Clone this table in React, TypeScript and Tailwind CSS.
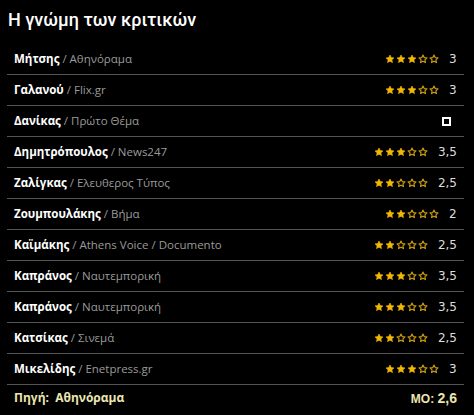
import React from "react";

type Review = { critic: string; outlet: string; rating: number | null };

const reviews: Review[] = [
  { critic: "Μήτσης", outlet: "Αθηνόραμα", rating: 3 },
  { critic: "Γαλανού", outlet: "Flix.gr", rating: 3 },
  { critic: "Δανίκας", outlet: "Πρώτο Θέμα", rating: null },
  { critic: "Δημητρόπουλος", outlet: "News247", rating: 3.5 },
  { critic: "Ζαλίγκας", outlet: "Ελευθερος Τύπος", rating: 2.5 },
  { critic: "Ζουμπουλάκης", outlet: "Βήμα", rating: 2 },
  { critic: "Καϊμάκης", outlet: "Athens Voice / Documento", rating: 2.5 },
  { critic: "Καπράνος", outlet: "Ναυτεμπορική", rating: 3.5 },
  { critic: "Καπράνος", outlet: "Ναυτεμπορική", rating: 3.5 },
  { critic: "Κατσίκας", outlet: "Σινεμά", rating: 2.5 },
  { critic: "Μικελίδης", outlet: "Enetpress.gr", rating: 3 },
];

const STAR =
  "M12 2.5l2.9 6.1 6.6.8-4.9 4.6 1.3 6.6L12 17.3l-5.9 3.3 1.3-6.6-4.9-4.6 6.6-.8z";

function Star({ filled }: { filled: boolean }) {
  return (
    <svg viewBox="0 0 24 24" className="w-[10px] h-[10px]">
      <path
        d={STAR}
        fill={filled ? "#f2b705" : "none"}
        stroke={filled ? "#f2b705" : "#c89a10"}
        strokeWidth={filled ? 1.5 : 2.8}
        strokeLinejoin="round"
      />
    </svg>
  );
}

function Stars({ value }: { value: number }) {
  return (
    <div className="flex items-center gap-[1px]">
      {[1, 2, 3, 4, 5].map((i) => (
        <Star key={i} filled={i <= value} />
      ))}
    </div>
  );
}

export default function App() {
  return (
    <div
      className="w-[474px] h-[415px] bg-black text-white"
      style={{ fontFamily: '"Open Sans", "Noto Sans", sans-serif' }}
    >
      <h1
        className="pl-[8px] pt-[8px] h-[44px] text-[18px] font-medium leading-[24px]"
        style={{ fontFamily: 'Roboto, "Noto Sans", sans-serif' }}
      >
        Η γνώμη των κριτικών
      </h1>

      <div className="ml-[7px] w-[457px]">
        {reviews.map((r, i) => (
          <div
            key={i}
            className="h-[31px] flex items-center justify-between px-[7px] border-b border-[#555]"
          >
            <div className="text-[11.5px]">
              <span className="font-bold">{r.critic}</span>
              <span className="text-[#9a9a9a]"> / {r.outlet}</span>
            </div>
            {r.rating === null ? (
              <div className="mr-[6px] w-[9px] h-[9px] border-2 border-white" />
            ) : (
              <div className="flex items-center gap-[10px]">
                <Stars value={r.rating} />
                <span
                  className="text-[12px] text-[#ddd] min-w-[8px]"
                  style={{ fontFamily: '"DejaVu Sans", sans-serif' }}
                >
                  {String(r.rating).replace(".", ",")}
                </span>
              </div>
            )}
          </div>
        ))}

        <div className="h-[26px] flex items-center justify-between px-[7px] text-[12px] font-bold text-[#ece6b0]">
          <span>Πηγή:&nbsp; Αθηνόραμα</span>
          <span style={{ fontFamily: '"Liberation Sans", sans-serif' }}>
            ΜΟ: <span className="text-[14px]">2,6</span>
          </span>
        </div>
      </div>
    </div>
  );
}
